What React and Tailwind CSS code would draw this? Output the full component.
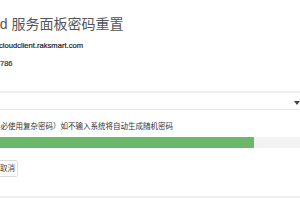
export default function App() {
  return (
    <div className="w-[300px] h-[200px] overflow-hidden bg-white relative" style={{ fontFamily: '"Liberation Sans", "Noto Sans CJK SC", sans-serif' }}>
      <div className="pt-[15px] -ml-[29px] text-[14px] leading-[18px] text-[#555] whitespace-nowrap">
        Cloud 服务面板密码重置
      </div>
      <div className="mt-[8px] -ml-[1px] text-[7.6px] leading-[10px] font-medium text-[#222] whitespace-nowrap [-webkit-text-stroke:0.2px_#222]">
        cloudclient.raksmart.com
      </div>
      <div className="mt-[8px] -ml-[12.5px] text-[7.5px] leading-[10px] text-[#333] whitespace-nowrap [-webkit-text-stroke:0.2px_#333]">
        123786
      </div>
      <div className="mt-[22px] h-[2px] bg-[#efefef]" />
      <div className="relative h-[17px] border-b border-[#e5e5e5] -mr-[4px]">
        <span className="absolute right-[4px] top-[8px] w-0 h-0 border-l-[3px] border-r-[3px] border-t-[4px] border-l-transparent border-r-transparent border-t-[#444]" />
      </div>
      <div className="mt-[12px] -ml-[22px] text-[7.5px] leading-[10px] text-[#333] whitespace-nowrap">
        （请务必使用复杂密码）如不输入系统将自动生成随机密码
      </div>
      <div className="mt-[5px] h-[11px] bg-[#f3f3f3] flex">
        <div className="w-[254px] h-full bg-[#6cb86a]" />
      </div>
      <div className="mt-[12px] -ml-[30px] flex gap-[4px]">
        <div className="h-[17px] px-[3px] border border-[#ddd] rounded-[2px] text-[7.5px] leading-[15px] text-[#444]">确定</div>
        <div className="h-[17px] px-[2px] border border-[#ddd] rounded-[2px] text-[7.5px] leading-[15px] text-[#444]">取消</div>
      </div>
      <div className="mt-[19px] h-[2px] bg-[#efefef]" />
    </div>
  );
}
